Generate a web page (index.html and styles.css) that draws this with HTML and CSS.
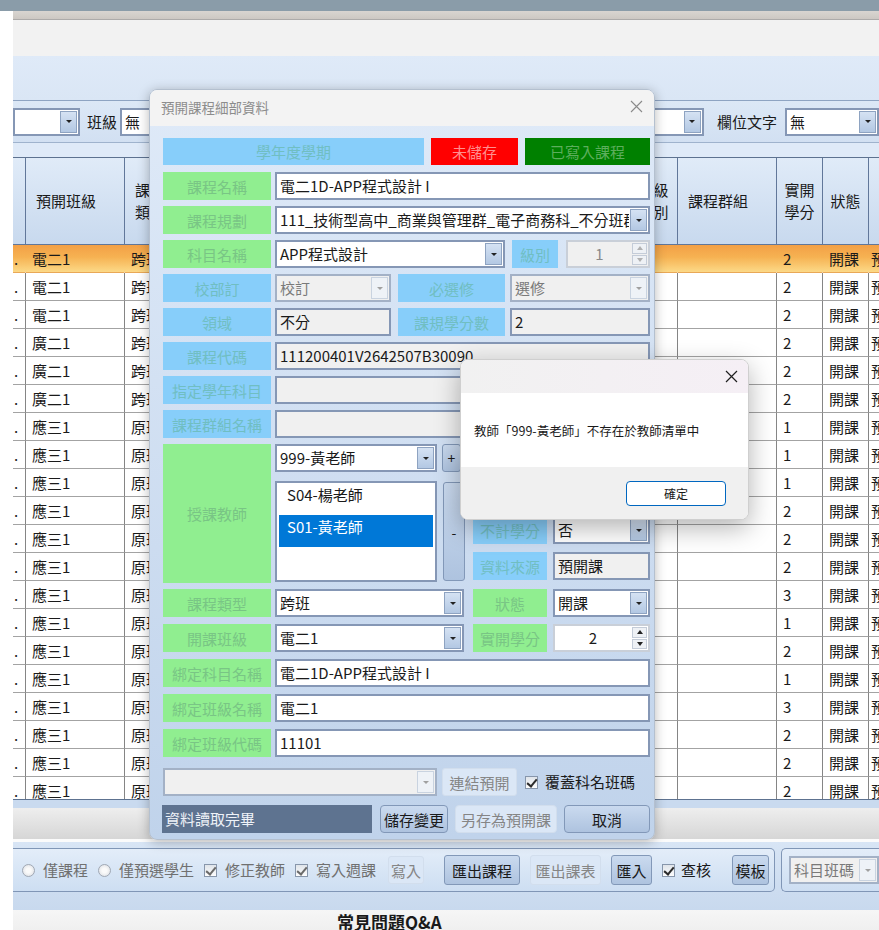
FILE: index.html
```html
<!DOCTYPE html>
<html lang="zh-Hant">
<head>
  <meta charset="UTF-8">
  <meta name="viewport" content="width=device-width, initial-scale=1.0">
  <title>預開課程細部資料</title>
  <link rel="stylesheet" href="styles.css">
</head>
<body>
<div class="screen">
  <div class="desk"></div>

  <div class="app">
    <div class="frame-edge"></div>
    <div class="menu-strip"></div>
    <div class="ribbon"></div>

    <div class="toolbar">
      <div class="combo tb-combo-a"><span class="combo-text"></span><span class="drop"></span></div>
      <span class="tb-label">班級</span>
      <div class="combo tb-combo-b"><span class="combo-text">無</span><span class="drop"></span></div>
      <div class="toolbar-right">
        <div class="combo tb-combo-c"><span class="combo-text"></span><span class="drop"></span></div>
        <span class="tb-label">欄位文字</span>
        <div class="combo tb-combo-d"><span class="combo-text">無</span><span class="drop"></span></div>
      </div>
    </div>
    <div class="toolbar-gap"></div>

    <div class="grid-wrap">
      <table class="grid">
        <colgroup>
          <col style="width:13px"><col style="width:99px"><col style="width:80px"><col style="width:110px">
          <col style="width:100px"><col style="width:115px"><col style="width:100px"><col style="width:48px">
          <col style="width:99px"><col style="width:46px"><col style="width:46px"><col style="width:60px">
        </colgroup>
        <thead>
          <tr>
            <th></th>
            <th>預開班級</th>
            <th>課程<br>類別</th>
            <th></th>
            <th></th>
            <th></th>
            <th></th>
            <th class="mid">班級<br>類別</th>
            <th>課程群組</th>
            <th class="mid">實開<br>學分</th>
            <th class="mid">狀態</th>
            <th>資料來源</th>
          </tr>
        </thead>
        <tbody id="rows"></tbody>
      </table>
    </div>

    <div class="band"></div>
    <div class="hscroll"></div>

    <div class="actions">
      <div class="groupbox gb-main">
        <label class="opt off"><span class="radio"></span>僅課程</label>
        <label class="opt off"><span class="radio"></span>僅預選學生</label>
        <label class="opt off"><span class="cb on"></span>修正教師</label>
        <label class="opt off"><span class="cb on"></span>寫入週課</label>
        <button class="btn flat b-write">寫入</button>
        <button class="btn b-export">匯出課程</button>
        <button class="btn flat b-table">匯出課表</button>
        <button class="btn b-import">匯入</button>
        <label class="opt check"><span class="cb on"></span>查核</label>
        <button class="btn b-tpl">模板</button>
      </div>
      <div class="groupbox gb-side">
        <div class="combo off sort-combo"><span class="combo-text">科目班碼</span><span class="drop"></span></div>
      </div>
    </div>

    <div class="footer-title">常見問題Q&amp;A</div>
  </div>

  <!-- course detail dialog -->
  <div class="dialog">
    <div class="dlg-title">
      <span>預開課程細部資料</span>
      <svg class="dlg-close" width="13" height="13" viewBox="0 0 13 13"><path d="M1 1L12 12M12 1L1 12" stroke="#8a8a8a" stroke-width="1.1"/></svg>
    </div>
    <div class="dlg-body">
      <div class="stack-a">
        <div class="row">
          <div class="lbl sky w-term">學年度學期</div>
          <div class="lbl red w-unsaved">未儲存</div>
          <div class="lbl dkgreen w-written">已寫入課程</div>
        </div>
        <div class="row">
          <div class="lbl green">課程名稱</div>
          <div class="field fill">電二1D-APP程式設計 I</div>
        </div>
        <div class="row">
          <div class="lbl green">課程規劃</div>
          <div class="combo fill"><span class="combo-text">111_技術型高中_商業與管理群_電子商務科_不分班群</span><span class="drop"></span></div>
        </div>
        <div class="row">
          <div class="lbl green">科目名稱</div>
          <div class="combo w-subject"><span class="combo-text">APP程式設計</span><span class="drop"></span></div>
          <div class="lbl sky w-level">級別</div>
          <div class="spin off w-levelbox"><span class="spin-val">1</span><span class="spin-btns"><i class="up"></i><i class="down"></i></span></div>
        </div>
        <div class="row">
          <div class="lbl sky">校部訂</div>
          <div class="combo off w-half"><span class="combo-text">校訂</span><span class="drop"></span></div>
          <div class="lbl sky w-mid">必選修</div>
          <div class="combo off fill"><span class="combo-text">選修</span><span class="drop"></span></div>
        </div>
        <div class="row">
          <div class="lbl sky">領域</div>
          <div class="field ro w-half">不分</div>
          <div class="lbl sky w-mid">課規學分數</div>
          <div class="field ro fill">2</div>
        </div>
        <div class="row">
          <div class="lbl sky">課程代碼</div>
          <div class="field ro fill">111200401V2642507B30090</div>
        </div>
        <div class="row">
          <div class="lbl sky">指定學年科目</div>
          <div class="field ro fill"></div>
        </div>
        <div class="row">
          <div class="lbl sky">課程群組名稱</div>
          <div class="field ro fill"></div>
        </div>

        <div class="row teach">
          <div class="lbl green">授課教師</div>
          <div class="teach-mid">
            <div class="teach-pick">
              <div class="combo w-teacher"><span class="combo-text">999-黃老師</span><span class="drop"></span></div>
              <button class="btn sq plus">+</button>
            </div>
            <div class="teach-list">
              <div class="listbox">
                <div class="li">S04-楊老師</div>
                <div class="li sel">S01-黃老師</div>
              </div>
              <button class="btn sq minus">-</button>
            </div>
          </div>
          <div class="teach-side">
            <div class="row"><div class="lbl sky w-side"></div><div class="combo fill"><span class="combo-text"></span><span class="drop"></span></div></div>
            <div class="row"><div class="lbl sky w-side"></div><div class="field ro fill"></div></div>
            <div class="row"><div class="lbl sky w-side">不計學分</div><div class="combo fill"><span class="combo-text">否</span><span class="drop"></span></div></div>
            <div class="row"><div class="lbl sky w-side">資料來源</div><div class="field ro fill">預開課</div></div>
          </div>
        </div>
      </div>

      <div class="stack-b">
        <div class="row">
          <div class="lbl green">課程類型</div>
          <div class="combo w-type"><span class="combo-text">跨班</span><span class="drop"></span></div>
          <div class="lbl green w-side">狀態</div>
          <div class="combo fill"><span class="combo-text">開課</span><span class="drop"></span></div>
        </div>
        <div class="row">
          <div class="lbl green">開課班級</div>
          <div class="combo w-type"><span class="combo-text">電二1</span><span class="drop"></span></div>
          <div class="lbl green w-side">實開學分</div>
          <div class="spin fill"><span class="spin-val">2</span><span class="spin-btns"><i class="up"></i><i class="down"></i></span></div>
        </div>
        <div class="row">
          <div class="lbl green">綁定科目名稱</div>
          <div class="field fill">電二1D-APP程式設計 I</div>
        </div>
        <div class="row">
          <div class="lbl green">綁定班級名稱</div>
          <div class="field fill">電二1</div>
        </div>
        <div class="row">
          <div class="lbl green">綁定班級代碼</div>
          <div class="field fill">11101</div>
        </div>
      </div>

      <div class="row link-row">
        <div class="combo off w-link"><span class="combo-text"></span><span class="drop"></span></div>
        <button class="btn flat w-linkbtn">連結預開</button>
        <label class="opt"><span class="cb on"></span>覆蓋科名班碼</label>
      </div>

      <div class="row cmd-row">
        <div class="status">資料讀取完畢</div>
        <button class="btn w-save">儲存變更</button>
        <button class="btn flat w-saveas">另存為預開課</button>
        <button class="btn fill">取消</button>
      </div>
    </div>
  </div>

  <!-- message box -->
  <div class="msgbox">
    <div class="msg-title">
      <svg width="13" height="13" viewBox="0 0 13 13"><path d="M1 1L12 12M12 1L1 12" stroke="#1f1f1f" stroke-width="1.2"/></svg>
    </div>
    <div class="msg-body">教師「999-黃老師」不存在於教師清單中</div>
    <div class="msg-foot"><button class="msg-ok">確定</button></div>
  </div>
</div>

<script>
  // background grid rows: class, type, credits
  const data = [
    ["電二1", "跨班", 2], ["電二1", "跨班", 2], ["電二1", "跨班", 2],
    ["廣二1", "跨班", 2], ["廣二1", "跨班", 2], ["廣二1", "跨班", 2],
    ["應三1", "原班", 1], ["應三1", "原班", 1], ["應三1", "原班", 1],
    ["應三1", "原班", 2], ["應三1", "原班", 2], ["應三1", "原班", 2],
    ["應三1", "原班", 3], ["應三1", "原班", 1], ["應三1", "原班", 2],
    ["應三1", "原班", 1], ["應三1", "原班", 3], ["應三1", "原班", 2],
    ["應三1", "原班", 2], ["應三1", "原班", 2]
  ];
  const body = document.getElementById("rows");
  data.forEach((d, i) => {
    const tr = document.createElement("tr");
    if (i === 0) tr.className = "current";
    const cells = [".", d[0], d[1], "", "", "", "", "", "", d[2], "開課", "預開課"];
    cells.forEach((text, c) => {
      const td = document.createElement("td");
      td.textContent = text;
      if (c === 0) td.className = "tail";
      if (c === 11) td.className = "last";
      tr.appendChild(td);
    });
    body.appendChild(tr);
  });
</script>
</body>
</html>
```

FILE: styles.css
```css
* {
  box-sizing: border-box;
}

body {
  margin: 0;
  font-family: "Noto Sans CJK TC", "Noto Sans", sans-serif;
  color: #1a1a1a;
  background: #fff;
}

.screen {
  position: relative;
  width: 879px;
  height: 930px;
  overflow: hidden;
  background: #fff;
}

.desk {
  height: 11px;
  background: #8a9ca9;
}

.app {
  margin-left: 13px;
  width: 866px;
}

.frame-edge {
  height: 9px;
  background: linear-gradient(#d9d5d1, #cdc8c3);
  border-bottom: 1px solid #adabaa;
}

.menu-strip {
  height: 36px;
  background: #f2f2f2;
}

.ribbon {
  height: 44px;
  background: linear-gradient(#dfeaf8, #dae6f5);
}

/* toolbar */
.toolbar {
  height: 43px;
  display: flex;
  align-items: center;
  background: linear-gradient(#dce8f6, #d2e0f2);
  border-top: 1px solid #8ea4c2;
  border-bottom: 1px solid #9fb3cd;
}

.toolbar-right {
  margin-left: auto;
  display: flex;
  align-items: center;
}

.tb-label {
  font-size: 15px;
  line-height: 20px;
  white-space: nowrap;
}

.tb-combo-a {
  width: 67px;
  border-left: none;
  margin-right: 7px;
}

.tb-combo-b {
  width: 200px;
  margin-left: 3px;
}

.tb-combo-c {
  width: 140px;
  margin-right: 13px;
}

.tb-combo-d {
  width: 94px;
  margin-left: 8px;
}

.toolbar-gap {
  height: 14px;
  background: #dfeaf8;
}

/* combo / field */
.combo {
  display: flex;
  height: 28px;
  background: #fff;
  border: 2px solid #8597b5;
}

.combo-text {
  flex: 1;
  min-width: 0;
  padding-left: 3px;
  font-size: 15px;
  line-height: 24px;
  white-space: nowrap;
  overflow: hidden;
}

.drop {
  flex: none;
  width: 17px;
  margin: 1px;
  background: linear-gradient(#d5e2f3, #b3c8e3);
  border: 1px solid #8ea3c1;
  display: flex;
  align-items: center;
  justify-content: center;
}

.drop::after {
  content: "";
  border-left: 3px solid transparent;
  border-right: 3px solid transparent;
  border-top: 3px solid #222;
}

.combo.off {
  background: #f0f0f0;
  border-color: #a3b1c6;
}

.combo.off .combo-text {
  color: #7a7a7a;
}

.combo.off .drop {
  background: #eef2f7;
  border-color: #c9d3e0;
}

.combo.off .drop::after {
  border-top-color: #a0a0a0;
}

.field {
  height: 28px;
  background: #fff;
  border: 2px solid #8597b5;
  padding-left: 3px;
  font-size: 15px;
  line-height: 24px;
  white-space: nowrap;
  overflow: hidden;
}

.field.ro {
  background: #f0f0f0;
}

.spin {
  display: flex;
  height: 28px;
  background: #fff;
  border: 2px solid #c9cfd8;
}

.spin-val {
  flex: 1;
  text-align: center;
  font-size: 15px;
  line-height: 24px;
}

.spin-btns {
  width: 17px;
  display: flex;
  flex-direction: column;
  gap: 1px;
  padding: 1px;
}

.spin-btns i {
  flex: 1;
  display: flex;
  align-items: center;
  justify-content: center;
  background: #eef1f5;
  border: 1px solid #c4ccd8;
}

.spin-btns .up::after {
  content: "";
  border-left: 3px solid transparent;
  border-right: 3px solid transparent;
  border-bottom: 4px solid #222;
}

.spin-btns .down::after {
  content: "";
  border-left: 3px solid transparent;
  border-right: 3px solid transparent;
  border-top: 4px solid #222;
}

.spin.off {
  background: #f0f0f0;
}

.spin.off .spin-val {
  color: #8a8a8a;
}

.spin.off .spin-btns i::after {
  border-bottom-color: #b0b0b0;
  border-top-color: #b0b0b0;
}

/* background grid */
.grid-wrap {
  height: 643px;
  overflow: hidden;
  background: #fff;
  border-top: 1px solid #5d7290;
  border-bottom: 1px solid #5d7290;
}

.grid {
  border-collapse: separate;
  border-spacing: 0;
  table-layout: fixed;
  width: 916px;
  font-size: 15px;
}

.grid th {
  height: 87px;
  padding: 0 10px;
  background: linear-gradient(#e0ebf8, #c8d9ee);
  border-right: 1px solid #61779a;
  border-bottom: 1px solid #61779a;
  font-weight: normal;
  text-align: left;
  line-height: 22px;
  white-space: nowrap;
  overflow: hidden;
}

.grid th.mid {
  text-align: center;
  padding: 0;
}

.grid td {
  height: 28px;
  padding: 0 6px;
  border-right: 1px solid #858585;
  border-bottom: 1px solid #a3a3a3;
  line-height: 26px;
  white-space: nowrap;
  overflow: hidden;
}

.grid td.tail {
  padding: 0 1px;
}

.grid td.last {
  padding: 0 2px;
}

.grid tr.current td {
  background: linear-gradient(#f3a046, #f6b252 45%, #fcd987);
  border-right-color: transparent;
  border-bottom-color: #e9a857;
}

.band {
  height: 8px;
  background: #c9daef;
}

.hscroll {
  height: 34px;
  background: linear-gradient(#eeeeee, #d6d6d6);
  border-bottom: 3px solid #fbfbfb;
}

/* bottom command panel */
.actions {
  height: 68px;
  padding-top: 6px;
  display: flex;
  gap: 6px;
  background: linear-gradient(#d8e5f5, #c8d9ee);
}

.groupbox {
  height: 44px;
  display: flex;
  align-items: center;
  border: 1px solid #8096b6;
  border-radius: 5px;
  background: linear-gradient(#e3edf9, #cddef2);
}

.gb-main {
  width: 770px;
  border-left: none;
  border-radius: 0 5px 5px 0;
  padding-left: 9px;
  gap: 10px;
}

.gb-side {
  flex: 1;
  padding-left: 7px;
  border-right: none;
  border-radius: 5px 0 0 5px;
}

.sort-combo {
  width: 90px;
}

.opt {
  display: flex;
  align-items: center;
  gap: 8px;
  font-size: 15px;
  line-height: 20px;
  white-space: nowrap;
}

.opt.off {
  color: #707070;
}

.radio {
  width: 13px;
  height: 13px;
  border-radius: 50%;
  border: 1px solid #a0a8b4;
  background: radial-gradient(#fafafa 30%, #d8dbe0);
}

.cb {
  position: relative;
  width: 13px;
  height: 13px;
  border: 1px solid #8796ab;
  background: linear-gradient(#dfe4ea, #fdfdfd);
}

.cb.on::after {
  content: "";
  position: absolute;
  left: 3px;
  top: 0;
  width: 4px;
  height: 8px;
  border-right: 2px solid #2b2b2b;
  border-bottom: 2px solid #2b2b2b;
  transform: rotate(40deg);
}

.opt.off .cb.on::after {
  border-color: #6a6a6a;
}

.opt.check {
  gap: 6px;
}

.btn {
  height: 28px;
  padding: 0;
  border: 1px solid #8298b8;
  border-radius: 3px;
  background: linear-gradient(#cadaef, #aec3df);
  font-family: inherit;
  font-size: 15px;
  color: #1a1a1a;
}

.btn.flat {
  background: #dbe7f6;
  border-color: #d2deed;
  color: #858585;
}

.b-write {
  width: 36px;
  margin-left: 2px;
}

.b-export {
  width: 76px;
  height: 30px;
  margin-left: 10px;
}

.b-table {
  width: 71px;
  height: 30px;
}

.b-import {
  width: 41px;
  height: 30px;
}

.b-tpl {
  width: 37px;
  height: 30px;
  margin-left: 11px;
}

.footer-title {
  height: 30px;
  padding: 2px 0 0 324px;
  background: linear-gradient(#f6f6f6, #ececec);
  font-size: 17px;
  font-weight: bold;
  line-height: 20px;
}

/* dialog */
.dialog {
  position: absolute;
  left: 149px;
  top: 89px;
  width: 506px;
  height: 751px;
  border: 1px solid #b4c0cf;
  border-radius: 8px;
  overflow: hidden;
  background: linear-gradient(#dfeaf8, #c0d3eb);
  box-shadow: 0 2px 12px rgba(0, 0, 0, 0.28);
}

.dlg-title {
  height: 36px;
  display: flex;
  align-items: center;
  justify-content: space-between;
  padding: 0 11px 3px 11px;
  background: #f3f3f3;
  font-size: 13.5px;
  color: #8c8c8c;
}

.dlg-body {
  padding: 12px 4px 0 13px;
  display: flex;
  flex-direction: column;
}

.stack-a {
  display: flex;
  flex-direction: column;
  gap: 6px;
}

.stack-b {
  margin-top: 6px;
  display: flex;
  flex-direction: column;
  gap: 7px;
}

.row {
  display: flex;
  height: 28px;
  gap: 4px;
}

.fill {
  flex: 1;
  min-width: 0;
}

.lbl {
  flex: none;
  width: 108px;
  display: flex;
  align-items: center;
  justify-content: center;
  font-size: 15px;
  white-space: nowrap;
}

.lbl.green {
  background: #90ee90;
  color: #79c585;
}

.lbl.sky {
  background: #87cefa;
  color: #70bec2;
}

.lbl.red {
  background: #ff0000;
  color: #ff8f8f;
}

.lbl.dkgreen {
  background: #008000;
  color: #5cae5c;
}

.w-term {
  width: 261px;
  height: 27px;
}

.w-unsaved {
  width: 87px;
  height: 27px;
  margin-left: 3px;
}

.w-written {
  flex: 1;
  height: 27px;
  margin-left: 3px;
}

.w-subject {
  width: 230px;
}

.w-level {
  width: 46px;
  margin-left: 3px;
}

.w-levelbox {
  flex: 1;
  margin-left: 4px;
}

.w-half {
  width: 116px;
}

.w-mid {
  width: 107px;
  margin: 0 1px 0 3px;
}

/* teacher block */
.row.teach {
  height: 139px;
}

.row.teach > .lbl {
  height: 139px;
}

.teach-mid {
  width: 190px;
  display: flex;
  flex-direction: column;
  gap: 9px;
}

.teach-pick {
  display: flex;
  gap: 5px;
}

.w-teacher {
  width: 162px;
}

.teach-list {
  display: flex;
  gap: 6px;
}

.listbox {
  width: 162px;
  height: 101px;
  padding: 0 2px;
  background: #fff;
  border: 2px solid #8597b5;
}

.li {
  height: 32px;
  padding: 1px 0 0 8px;
  font-size: 15px;
  line-height: 22px;
}

.li.sel {
  background: #0078d7;
  color: #fff;
}

.sq {
  width: 19px;
  font-size: 14px;
  line-height: 1;
}

.sq.minus {
  width: 22px;
  height: 99px;
  margin-top: 1px;
}

.teach-side {
  flex: 1;
  margin-left: 4px;
  display: flex;
  flex-direction: column;
  gap: 8px;
}

.teach-side .row {
  gap: 6px;
}

.w-side {
  width: 74px;
}

.w-type {
  width: 189px;
  margin-right: 5px;
}

.stack-b .w-side {
  margin-right: 2px;
}

.link-row {
  margin-top: 11px;
  align-items: center;
}

.w-link {
  width: 274px;
}

.w-linkbtn {
  width: 75px;
  margin-left: 1px;
}

.link-row .opt {
  margin-left: 4px;
  gap: 7px;
}

.cmd-row {
  margin-top: 9px;
  gap: 7px;
}

.status {
  width: 210px;
  margin-left: -1px;
  padding-left: 3px;
  background: #5e7390;
  color: #eef2f8;
  font-size: 15px;
  line-height: 28px;
}

.cmd-row .btn {
  border-radius: 4px;
}

.w-save {
  width: 68px;
  margin-left: 1px;
}

.w-saveas {
  width: 102px;
}

/* message box */
.msgbox {
  position: absolute;
  left: 460px;
  top: 359px;
  width: 289px;
  height: 161px;
  border: 1px solid #cfcfcf;
  border-radius: 8px;
  overflow: hidden;
  background: #fff;
  box-shadow: 0 8px 26px rgba(0, 0, 0, 0.3);
}

.msg-title {
  height: 33px;
  display: flex;
  align-items: center;
  justify-content: flex-end;
  padding-right: 10px;
  background: linear-gradient(90deg, #f1f1f1, #f5eff5);
}

.msg-body {
  height: 74px;
  display: flex;
  align-items: center;
  padding-left: 13px;
  font-size: 12.5px;
  color: #1a1a1a;
}

.msg-foot {
  height: 52px;
  display: flex;
  justify-content: flex-end;
  padding: 14px 22px 0 0;
  background: #f0f0f0;
}

.msg-ok {
  width: 100px;
  height: 25px;
  border: 1px solid #0067c0;
  border-radius: 4px;
  background: #fff;
  font-family: inherit;
  font-size: 12px;
  color: #1a1a1a;
  box-shadow: inset 0 0 0 1px #ffffff;
}
```
